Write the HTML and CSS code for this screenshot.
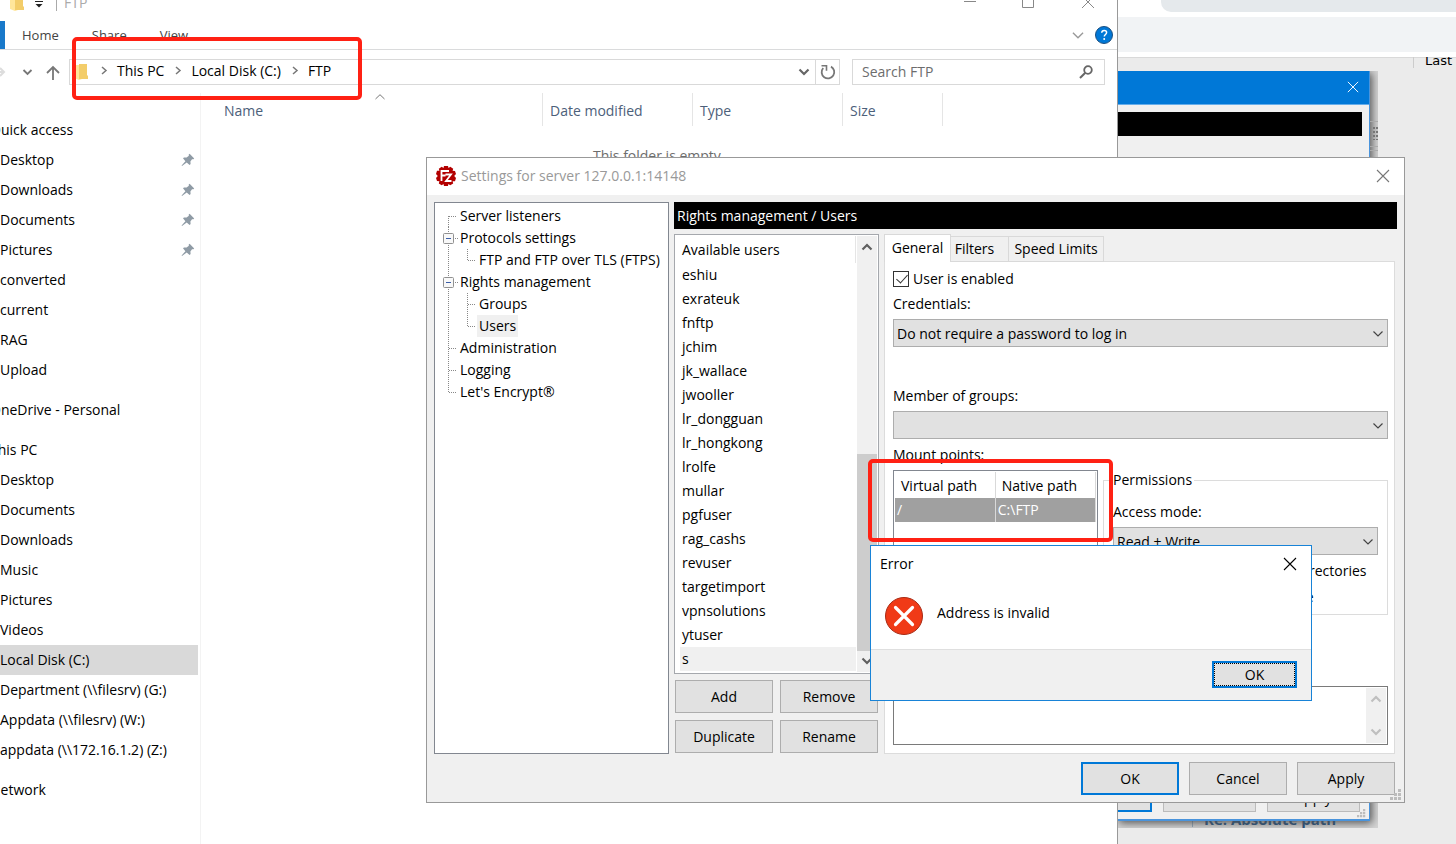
FILE: index.html
```html
<!DOCTYPE html>
<html lang="en">
<head>
<meta charset="utf-8">
<title>Settings for server 127.0.0.1:14148</title>
<link rel="stylesheet" href="styles.css">
</head>
<body>
<svg class="defs" width="0" height="0" aria-hidden="true">
  <defs>
    <symbol id="pin" viewBox="0 0 14 14"><path d="M8.6.8 13.2 5.4 12 6.4 11.2 6.1 9.4 8.4 9.6 11 8.6 12 5.7 9.4 1 13 .6 12.6 4.4 8.2 2 5.3 3 4.4 5.6 4.6 7.9 2.8 7.6 1.8z" fill="#8f9ba5"/></symbol>
    <symbol id="folder" viewBox="0 0 14 17"><path d="M0 2h8v14l-3 1-5-2z" fill="#ffe69b"/><path d="M5 1h8v11l1 1v3H5z" fill="#f3cd6a"/></symbol>
    <symbol id="crumb" viewBox="0 0 8 10"><path d="M2 1 6 4.500 2 8" fill="none" stroke="#777" stroke-width="1.5"/></symbol>
    <symbol id="down" viewBox="0 0 12 8"><path d="M1.5 1.5 6 6l4.500-4.500" fill="none" stroke="currentColor" stroke-width="1.200"/></symbol>
    <symbol id="down-bold" viewBox="0 0 12 8"><path d="M1.500 1.500 6 6l4.500-4.500" fill="none" stroke="currentColor" stroke-width="2.200"/></symbol>
    <symbol id="up-bold" viewBox="0 0 12 8"><path d="M1.500 6.500 6 2l4.500 4.500" fill="none" stroke="currentColor" stroke-width="2.200"/></symbol>
    <symbol id="cross" viewBox="0 0 14 14"><path d="M1 1l12 12M13 1 1 13" fill="none" stroke="currentColor" stroke-width="1.100"/></symbol>
    <symbol id="grip" viewBox="0 0 12 12"><path d="M8 0h3v3H8zM4 4h3v3H4zM8 4h3v3H8zM0 8h3v3H0zM4 8h3v3H4zM8 8h3v3H8z" fill="#bdbdbd"/></symbol>
  </defs>
</svg>

<div class="desktop">
  <section class="browser">
    <div class="browser-top"><div class="omnibox"></div></div>
    <div class="bookmarks"></div>
    <div class="browser-page"><span class="last">Last</span></div>
  </section>

  <section class="snapshot">
    <div class="old-window">
      <header class="old-title"><button class="icon-btn" aria-label="Close earlier window"><svg width="12" height="12"><use href="#cross"/></svg></button></header>
      <div class="old-heading"></div>
      <div class="old-space"></div>
      <footer class="old-footer"><span class="old-btn primary"></span><span class="old-btn"></span><span class="old-btn">Apply</span><svg width="9" height="9"><use href="#grip"/></svg></footer>
    </div>
    <div class="topic"><span>Re: Absolute path</span></div>
    <svg class="toolbar-edge" width="8" height="88" viewBox="0 0 8 88"><path d="M0 50.500h8M0 75.500h8M0 79.500h8" stroke="#aaa"/><path d="M4 56v13M7 56v13" stroke="#777" stroke-width="2" stroke-dasharray="2 2"/></svg>
  </section>

  <section class="explorer">
    <header class="ex-title">
      <svg class="title-folder" width="14" height="17"><use href="#folder"/></svg>
      <svg class="customize" width="8" height="8" viewBox="0 0 8 8"><path d="M0 1.500h8" stroke="#222"/><path d="M0.500 4h7L4 7.500z" fill="#222"/></svg>
      <span class="title-name">FTP</span>
      <svg class="win-controls" width="132" height="14" viewBox="0 0 132 14"><path d="M0 4.500h12M58.500 0v10.500h11V0M118 11 130-1M118-1l12 12" fill="none" stroke="#888"/></svg>
    </header>
    <nav class="ribbon">
      <span class="file-tab"></span>
      <button>Home</button><button>Share</button><button>View</button>
      <svg class="ribbon-chevron" width="14" height="9"><use href="#down"/></svg>
      <svg width="18" height="18" viewBox="0 0 18 18"><circle cx="9" cy="9" r="8.500" fill="#0078d7" stroke="#1b4f80"/><path d="M6.700 6.800C6.800 5.300 7.800 4.500 9.200 4.500c1.500 0 2.400.8 2.400 2 0 1.900-2.300 2-2.300 4" fill="none" stroke="#fff" stroke-width="1.500"/><circle cx="9.200" cy="12.900" r="1" fill="#fff"/></svg>
    </nav>
    <div class="address-row">
      <svg class="nav-arrows" width="62" height="20" viewBox="0 0 62 20"><path d="M-4 10H4M0 6l4 4-4 4" fill="none" stroke="#ddd" stroke-width="2"/><path d="M23.500 8 27.500 12l4-4" fill="none" stroke="#777" stroke-width="1.800"/><path d="M53 18V5M47 11l6-6 6 6" fill="none" stroke="#777" stroke-width="1.800"/></svg>
      <div class="address">
        <svg width="14" height="17"><use href="#folder"/></svg>
        <div class="crumbs">
          <svg width="8" height="10"><use href="#crumb"/></svg><span class="crumb">This PC</span>
          <svg width="8" height="10"><use href="#crumb"/></svg><span class="crumb">Local Disk (C:)</span>
          <svg width="8" height="10"><use href="#crumb"/></svg><span class="crumb">FTP</span>
        </div>
        <svg class="address-down" width="12" height="8"><use href="#down-bold"/></svg>
        <button class="refresh" aria-label="Refresh"><svg width="16" height="16" viewBox="0 0 16 16"><path d="M11 2.600A6.300 6.300 0 1 1 3.200 4" fill="none" stroke="#777" stroke-width="1.800"/><path d="M1.500 1.800h5v5" fill="none" stroke="#777" stroke-width="1.600"/></svg></button>
      </div>
      <div class="search">
        <input type="text" placeholder="Search FTP" aria-label="Search FTP">
        <svg width="14" height="14" viewBox="0 0 14 14"><circle cx="9" cy="5" r="3.800" fill="none" stroke="#666" stroke-width="1.800"/><path d="M6.300 7.700 1 13" stroke="#666" stroke-width="2"/></svg>
      </div>
    </div>
    <div class="ex-body">
      <ul class="side">
        <li class="root">Quick access</li>
        <li>Desktop<svg width="14" height="14"><use href="#pin"/></svg></li>
        <li>Downloads<svg width="14" height="14"><use href="#pin"/></svg></li>
        <li>Documents<svg width="14" height="14"><use href="#pin"/></svg></li>
        <li>Pictures<svg width="14" height="14"><use href="#pin"/></svg></li>
        <li>converted</li>
        <li>current</li>
        <li>RAG</li>
        <li>Upload</li>
        <li class="root spaced">OneDrive - Personal</li>
        <li class="root spaced">This PC</li>
        <li>Desktop</li>
        <li>Documents</li>
        <li>Downloads</li>
        <li>Music</li>
        <li>Pictures</li>
        <li>Videos</li>
        <li class="selected">Local Disk (C:)</li>
        <li>Department (\\filesrv) (G:)</li>
        <li>Appdata (\\filesrv) (W:)</li>
        <li>appdata (\\172.16.1.2) (Z:)</li>
        <li class="root spaced">Network</li>
      </ul>
      <div class="files">
        <div class="columns">
          <span class="col-name">Name</span><span>Date modified</span><span>Type</span><span>Size</span>
          <svg class="sort" width="10" height="6" viewBox="0 0 10 6"><path d="M.5 5 5 .7 9.500 5" fill="none" stroke="#777"/></svg>
        </div>
        <p class="empty">This folder is empty.</p>
      </div>
    </div>
  </section>
  <div class="mark mark-path"></div>

  <section class="settings">
    <header class="set-title">
      <svg width="20" height="20" viewBox="0 0 20 20"><path d="M8 0h4l.5 2 1.800-1.200 2.900 2-.6 2 2.400.1L20 8l-1.800 2L20 12l-1 3.200-2.400.1.600 2.100-3 1.900-1.800-1.200L12 20H8l-.5-2-1.800 1.200-2.900-1.800.6-2.200L1 15 0 12l1.800-2L0 8l1-3.200 2.400-.1-.6-2L5.700.8 7.500 2z" fill="#b30000"/><path d="M5.500 15V5H13M5.500 9.500h4M9.500 8.500H15L10 15h5.500" fill="none" stroke="#fff" stroke-width="1.800"/></svg>
      <h1>Settings for server 127.0.0.1:14148</h1>
      <button class="icon-btn" aria-label="Close"><svg width="14" height="14"><use href="#cross"/></svg></button>
    </header>
    <div class="set-body">
      <ul class="tree">
        <li><svg width="23" height="22"><path class="guide" d="M13.500 11v11M14 11.500h8"/></svg><span>Server listeners</span></li>
        <li><svg width="23" height="22"><path class="guide" d="M13.500 0v22M20 11.500h3"/><rect class="toggle" x="8.500" y="6.500" width="10" height="10" rx="1"/><path class="minus" d="M11 11.500h5"/></svg><span>Protocols settings</span></li>
        <li><svg width="42" height="22"><path class="guide" d="M13.500 0v22M32.500 0v11M33 11.500h8"/></svg><span>FTP and FTP over TLS (FTPS)</span></li>
        <li><svg width="23" height="22"><path class="guide" d="M13.500 0v22M20 11.500h3"/><rect class="toggle" x="8.500" y="6.500" width="10" height="10" rx="1"/><path class="minus" d="M11 11.500h5"/></svg><span>Rights management</span></li>
        <li><svg width="42" height="22"><path class="guide" d="M13.500 0v22M32.500 0v22M33 11.500h8"/></svg><span>Groups</span></li>
        <li><svg width="42" height="22"><path class="guide" d="M13.500 0v22M32.500 0v11M33 11.500h8"/></svg><span class="current">Users</span></li>
        <li><svg width="23" height="22"><path class="guide" d="M13.500 0v22M14 11.500h8"/></svg><span>Administration</span></li>
        <li><svg width="23" height="22"><path class="guide" d="M13.500 0v22M14 11.500h8"/></svg><span>Logging</span></li>
        <li><svg width="23" height="22"><path class="guide" d="M13.500 0v11M14 11.500h8"/></svg><span>Let's Encrypt®</span></li>
      </ul>
      <div class="set-main">
        <h2>Rights management / Users</h2>
        <div class="set-cols">
          <div class="users">
            <div class="user-box">
              <div class="user-list">
                <div class="user-head">Available users</div>
                <ul>
                  <li>eshiu</li><li>exrateuk</li><li>fnftp</li><li>jchim</li><li>jk_wallace</li><li>jwooller</li><li>lr_dongguan</li><li>lr_hongkong</li><li>lrolfe</li><li>mullar</li><li>pgfuser</li><li>rag_cashs</li><li>revuser</li><li>targetimport</li><li>vpnsolutions</li><li>ytuser</li><li class="current">s</li>
                </ul>
              </div>
              <div class="scroll"><svg width="12" height="8"><use href="#up-bold"/></svg><i class="thumb"></i><svg width="12" height="8"><use href="#down-bold"/></svg></div>
            </div>
            <div class="user-buttons"><button class="btn">Add</button><button class="btn">Remove</button><button class="btn">Duplicate</button><button class="btn">Rename</button></div>
          </div>
          <div class="notebook">
            <div class="tabs"><button class="tab active">General</button><button class="tab tab-filters">Filters</button><button class="tab tab-speed">Speed Limits</button></div>
            <div class="page">
              <label class="check"><input type="checkbox" checked>User is enabled</label>
              <label class="field" for="cred">Credentials:</label>
              <div class="select"><select id="cred"><option>Do not require a password to log in</option></select><svg width="12" height="8"><use href="#down"/></svg></div>
              <label class="field groups" for="groups">Member of groups:</label>
              <div class="select"><select id="groups"><option></option></select><svg width="12" height="8"><use href="#down"/></svg></div>
              <div class="field mounts">Mount points:</div>
              <div class="mount-row">
                <div class="mount-box">
                  <table><thead><tr><th>Virtual path</th><th>Native path</th></tr></thead><tbody><tr><td>/</td><td>C:\FTP</td></tr></tbody></table>
                </div>
                <fieldset>
                  <legend>Permissions</legend>
                  <label class="field" for="mode">Access mode:</label>
                  <div class="select"><select id="mode"><option>Read + Write</option></select><svg width="12" height="8"><use href="#down"/></svg></div>
                  <label class="check"><input type="checkbox" checked>Apply permissions to subdirectories</label>
                  <label class="check"><input type="checkbox" checked>Writable directory structure</label>
                </fieldset>
              </div>
              <label class="field" for="desc">Description:</label>
              <div class="desc"><textarea id="desc"></textarea><div class="scroll faint"><svg width="12" height="8"><use href="#up-bold"/></svg><svg width="12" height="8"><use href="#down-bold"/></svg></div></div>
            </div>
          </div>
        </div>
      </div>
    </div>
    <footer class="set-footer"><button class="btn primary">OK</button><button class="btn">Cancel</button><button class="btn">Apply</button></footer>
    <svg class="grip" width="12" height="12"><use href="#grip"/></svg>
  </section>
  <div class="mark mark-mount"></div>

  <section class="error" role="dialog" aria-label="Error">
    <header><span>Error</span><button class="icon-btn" aria-label="Close error"><svg width="14" height="14"><use href="#cross"/></svg></button></header>
    <div class="error-body">
      <svg width="38" height="38" viewBox="0 0 38 38"><circle cx="19" cy="19" r="18.500" fill="#f03a17" stroke="#a82a14"/><path d="M10.500 10.500l17 17M27.500 10.500l-17 17" stroke="#fff" stroke-width="3.200" stroke-linecap="round"/></svg>
      <p>Address is invalid</p>
    </div>
    <footer><button class="btn focused">OK</button></footer>
  </section>
</div>
</body>
</html>
```

FILE: styles.css
```css
* { box-sizing: border-box; }
body { margin: 0; font: 14px/20px "Open Sans", "Noto Sans", sans-serif; color: #000; }
ul { list-style: none; margin: 0; padding: 0; }
h1, h2, p { margin: 0; font-size: 14px; font-weight: 400; }
svg { display: block; flex: none; }
button, input, select, textarea { font: inherit; color: inherit; }
.defs { position: absolute; }
.desktop { position: relative; height: 100vh; overflow: hidden; background: #ebebeb; }
.icon-btn { padding: 0; border: 0; background: none; }
.btn { height: 33px; padding: 0; border: 1px solid #adadad; background: #e1e1e1; }
.btn.primary { border: 2px solid #0078d7; }

/* Browser behind the windows */
.browser { padding-left: 1118px; }
.browser-top { height: 17px; padding-left: 43px; background: #fff; }
.omnibox { height: 12px; border-bottom-left-radius: 10px; background: #e5e9ec; }
.bookmarks { height: 35px; background: #f1f3f5; }
.browser-page { display: flex; justify-content: flex-end; height: 16px; border-top: 5px solid #fff; box-shadow: inset 0 1px #d9d9d9; overflow: hidden; }
.last { width: 43px; padding-left: 11px; border-left: 1px solid #ccc; font: 13px/8px "DejaVu Sans", sans-serif; }

/* Captured desktop shown in the browser page */
.snapshot { position: absolute; left: 1117px; top: 71px; width: 261px; height: 757px; background: #d4d4d4; overflow: hidden; }
.old-window { position: relative; width: 253px; height: 750px; display: flex; flex-direction: column; border: solid #4a94dc; border-width: 0 1px 2px 0; background: #f0f0f0; box-shadow: 2px 2px 8px #555; }
.old-title { display: flex; justify-content: flex-end; align-items: center; height: 34px; padding: 0 10px 2px 0; border-bottom: 1px solid #65adea; background: #0078d7; color: #fff; }
.old-heading { height: 24px; margin: 7px 7px 0 0; background: #000; }
.old-space { flex: 1; }
.old-footer { position: relative; display: flex; gap: 11px; height: 40px; }
.old-btn { width: 93px; height: 33px; border: 1px solid #bbb; background: #e1e1e1; text-align: center; line-height: 36px; }
.old-btn.primary { width: 35px; border: 2px solid #0078d7; border-left: 0; }
.old-footer svg { position: absolute; right: 3px; bottom: 1px; }
.topic { height: 7px; overflow: hidden; padding-left: 75px; }
.topic span { display: block; width: 180px; margin-top: -10px; padding-left: 11px; border-left: 1px solid #8fa5b8; color: #1d4f80; font-weight: 700; line-height: 16px; font-size: 15px; }
.toolbar-edge { position: absolute; right: 0; top: 0; }

/* File explorer */
.explorer { position: absolute; left: 0; top: 0; bottom: 0; width: 1118px; display: flex; flex-direction: column; border-right: 1px solid #999; background: #fff; overflow: hidden; }
.ex-title { display: flex; height: 21px; padding: 0 21px 0 10px; }
.title-folder { margin-top: -6px; }
.customize { margin-left: 11px; }
.title-name { height: 11px; margin-left: 13px; padding-left: 7px; border-left: 1px solid #aaa; color: #aaa; line-height: 6px; }
.win-controls { margin: -3px 0 0 auto; }
.ribbon { display: flex; align-items: center; height: 29px; padding-right: 4px; border-bottom: 1px solid #dadbdc; }
.file-tab { align-self: stretch; width: 5px; margin-right: 17px; background: #1979ca; }
.ribbon button { padding: 0; margin-right: 33px; border: 0; background: none; color: #444; font-size: 13px; }
.ribbon-chevron { margin: 0 10px 0 auto; color: #999; }
.address-row { display: flex; align-items: center; height: 43px; padding-right: 12px; }
.nav-arrows { margin-right: 7px; }
.address { flex: 1; display: flex; align-items: center; height: 26px; padding-left: 4px; border: 1px solid #d9d9d9; }
.crumbs { display: flex; align-items: center; padding: 0 0 2px 12px; }
.crumb { padding: 0 10px 0 9px; }
.crumb:last-child { padding-right: 0; }
.address-down { margin: 0 5px 0 auto; color: #666; }
.refresh { display: grid; place-items: center; width: 24px; height: 24px; padding: 0; border: 0; border-left: 1px solid #d9d9d9; background: none; }
.search { display: flex; align-items: center; width: 253px; height: 26px; margin-left: 12px; padding: 0 11px 0 9px; border: 1px solid #d9d9d9; }
.search input { flex: 1; min-width: 0; padding: 0; border: 0; outline: 0; }
.search input::placeholder { color: #6d6d6d; opacity: 1; }
.ex-body { flex: 1; display: flex; min-height: 0; }
.side { width: 201px; padding: 22px 2px 0 0; border-right: 1px solid #f3f3f3; }
.side li { display: flex; align-items: center; justify-content: space-between; height: 30px; padding: 0 3px 1px 0; white-space: nowrap; }
.side .root { margin-left: -10px; }
.side .spaced { margin-top: 10px; }
.side .selected { background: #d9d9d9; }
.files { position: relative; flex: 1; }
.columns { display: grid; grid-template-columns: 342px 150px 150px 100px; color: #4c607a; }
.columns span { height: 33px; padding: 8px 0 0 7px; border-right: 1px solid #e5e5e5; }
.columns .col-name { padding-left: 23px; }
.sort { position: absolute; left: 174px; top: 1px; }
.empty { padding: 20px 0 0 392px; color: #6d6d6d; }

/* Highlight frames */
.mark { position: absolute; border: 4px solid #ff2114; border-radius: 5px; }
.mark-path { left: 72px; top: 37px; width: 290px; height: 63px; }
.mark-mount { left: 868px; top: 459px; width: 245px; height: 83px; }

/* Server settings */
.settings { position: absolute; left: 426px; right: 51px; top: 157px; border: 1px solid #999; background: #f0f0f0; }
.set-title { display: flex; align-items: center; gap: 5px; height: 37px; padding: 0 14px 1px 9px; background: #fff; color: #999; }
.set-title .icon-btn { margin-left: auto; color: #777; }
.set-body { display: flex; gap: 5px; padding: 7px 7px 0; }
.tree { width: 235px; padding-top: 2px; border: 1px solid #828790; background: #fff; }
.tree li { display: flex; height: 22px; white-space: nowrap; }
.tree span { padding: 0 2px; line-height: 22px; }
.current { background: #f0f0f0; }
.guide { fill: none; stroke: #888; stroke-dasharray: 1 1; }
.toggle { fill: #f8f8f8; stroke: #919191; }
.minus { stroke: #3b5ea8; }
.set-main { flex: 1; min-width: 0; }
h2 { height: 27px; padding-left: 3px; background: #000; color: #fff; line-height: 27px; }
.set-cols { display: flex; gap: 5px; padding: 5px 2px 0 0; }
.users { width: 205px; }
.user-box { display: flex; padding: 1px; border: 1px solid #a5a8ad; background: #fff; }
.user-list { flex: 1; padding: 0 1px 1px 4px; }
.user-head { height: 27px; padding: 4px 0 0 2px; border-right: 1px solid #e5e5e5; }
.user-list li { height: 24px; padding-left: 2px; line-height: 24px; }
.scroll { display: flex; flex-direction: column; justify-content: space-between; align-items: center; width: 20px; padding: 7px 0; background: #f0f0f0; color: #606060; }
.thumb { width: 20px; height: 197px; margin: auto 0 6px; background: #cdcdcd; }
.faint { color: #bfbfbf; }
.user-buttons { display: grid; grid-template-columns: 1fr 1fr; gap: 7px; padding: 6px 1px 0; }
.notebook { flex: 1; display: flex; flex-direction: column; min-width: 0; }
.tabs { display: flex; align-items: flex-end; height: 28px; box-shadow: inset 0 -1px #dcdcdc; }
.tab { width: 58px; height: 26px; padding: 0; border: 1px solid #d9d9d9; border-left: 0; background: #f0f0f0; }
.tab.active { width: 67px; height: 28px; padding-bottom: 2px; border-left: 1px solid #d9d9d9; border-bottom: 0; background: #fff; }
.tab-filters { padding-right: 10px; }
.tab-speed { width: 95px; }
.page { flex: 1; display: flex; flex-direction: column; padding: 4px 6px 8px 8px; border: 1px solid #dcdcdc; border-top: 0; background: #fff; }
.check { display: flex; align-items: center; gap: 4px; height: 26px; white-space: nowrap; }
.check input { appearance: none; width: 16px; height: 16px; margin: 0; border: 1px solid #333; background: #fff; }
.check input:checked::after { content: ""; display: block; width: 5px; height: 10px; margin: 0 0 0 5px; border: solid #333; border-width: 0 1px 1px 0; rotate: 42deg; }
.field { height: 27px; line-height: 24px; }
.groups { margin-top: 37px; }
.mounts { margin-top: 4px; }
.select { position: relative; }
.select select { display: block; width: 100%; height: 28px; padding: 2px 3px 0; border: 1px solid #adadad; border-radius: 0; background: #e1e1e1; appearance: none; }
.select svg { position: absolute; right: 4px; top: 11px; color: #444; pointer-events: none; }
.mount-row { display: flex; gap: 5px; align-items: flex-start; height: 189px; }
.mount-box { width: 205px; height: 184px; padding: 1px; border: 1px solid #828790; }
table { width: 201px; border-collapse: collapse; table-layout: fixed; }
th, td { height: 24px; padding: 0 0 0 6px; border-right: 1px solid #d9d9d9; font-weight: 400; text-align: left; }
th { height: 26px; padding-top: 2px; }
td { padding-left: 2px; background: #a0a0a0; color: #fff; }
fieldset { flex: 1; min-width: 0; margin: 0; padding: 10px 9px 4px; border: 1px solid #dcdcdc; }
legend { padding: 0 2px 0 0; }
fieldset .field { display: block; }
fieldset .check:nth-of-type(2) { margin-top: 3px; }
.desc { display: flex; height: 59px; padding: 1px; border: 1px solid #7a7a7a; }
.desc textarea { flex: 1; min-width: 0; padding: 2px; border: 0; outline: 0; resize: none; }
.set-footer { display: flex; justify-content: flex-end; gap: 10px; padding: 8px 9px 7px; }
.set-footer .btn { width: 98px; }
.grip { position: absolute; right: 2px; bottom: 1px; }

/* Error dialog */
.error { position: absolute; left: 870px; top: 545px; width: 442px; border: 1px solid #1883d7; background: #fff; }
.error header { display: flex; justify-content: space-between; align-items: center; height: 37px; padding: 0 14px 1px 9px; }
.error-body { display: flex; gap: 14px; height: 66px; padding: 14px; }
.error-body p { padding-top: 6px; }
.error footer { display: flex; justify-content: flex-end; padding: 11px 14px 12px; border-top: 1px solid #dfdfdf; background: #f0f0f0; }
.focused { width: 85px; height: 27px; border: 2px solid #0078d7; outline: 1px dotted #000; outline-offset: -3px; }
```
